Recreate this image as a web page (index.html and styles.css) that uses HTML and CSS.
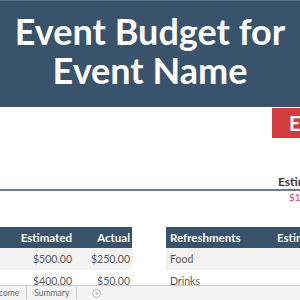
FILE: index.html
```html
<!DOCTYPE html>
<html lang="en">

<head>
    <meta charset="UTF-8">
    <title>Event Budget</title>
    <link rel="stylesheet" href="styles.css">
</head>

<body>

    <div class="sheet">
        <header class="title-bar">
            <h1>
                <span class="title-line">Event Budget for</span>
                <span class="title-line">Event Name</span>
            </h1>
        </header>

        <div class="badge-row">
            <div class="badge">Expenses</div>
        </div>

        <div class="totals">
            <div class="totals-label">Estimated</div>
            <div class="totals-rule"></div>
            <div class="totals-value">$1,</div>
        </div>

        <div class="tables">
            <table class="budget budget-left">
                <thead>
                    <tr>
                        <th class="col-name">Site</th>
                        <th class="col-num">Estimated</th>
                        <th class="col-num">Actual</th>
                    </tr>
                </thead>
                <tbody>
                    <tr class="shaded">
                        <td class="col-name">Room</td>
                        <td class="col-num">$500.00</td>
                        <td class="col-num">$250.00</td>
                    </tr>
                    <tr>
                        <td class="col-name">Site</td>
                        <td class="col-num">$400.00</td>
                        <td class="col-num">$50.00</td>
                    </tr>
                </tbody>
            </table>

            <table class="budget budget-right">
                <thead>
                    <tr>
                        <th class="col-name">Refreshments</th>
                        <th class="col-num">Estimated</th>
                    </tr>
                </thead>
                <tbody>
                    <tr class="shaded">
                        <td class="col-name">Food</td>
                        <td class="col-num"></td>
                    </tr>
                    <tr>
                        <td class="col-name">Drinks</td>
                        <td class="col-num"></td>
                    </tr>
                </tbody>
            </table>
        </div>
    </div>

    <footer class="tab-bar">
        <span class="tab tab-first">Income</span>
        <span class="tab">Summary</span>
        <span class="tab-add">+</span>
    </footer>

</body>

</html>
```

FILE: styles.css
```css
* {
    margin: 0;
    padding: 0;
    box-sizing: border-box;
}

body {
    width: 300px;
    height: 300px;
    overflow: hidden;
    background: white;
    font-family: 'Lato', 'Open Sans', sans-serif;
    display: flex;
    flex-direction: column;
}

.sheet {
    height: 285px;
    overflow: hidden;
}

.title-bar {
    height: 107px;
    background: #38536b;
    border-top: 1px solid #5b7388;
    display: flex;
    justify-content: center;
    padding-top: 11px;
}

.title-bar h1 {
    color: white;
    font-size: 36px;
    font-weight: 700;
    text-align: center;
    white-space: nowrap;
    display: flex;
    flex-direction: column;
}

.title-line {
    height: 39px;
    line-height: 39px;
}

.badge-row {
    padding: 1px 0 0 272px;
    height: 31px;
}

.badge {
    width: 120px;
    height: 30px;
    background: #d23c3c;
    color: white;
    font-size: 20px;
    font-weight: 700;
    line-height: 30px;
    padding-left: 17px;
    white-space: nowrap;
}

.totals {
    padding-top: 38px;
}

.totals-label {
    padding-left: 278px;
    font-size: 12px;
    font-weight: 700;
    color: #3c3c3c;
    line-height: 12px;
    white-space: nowrap;
}

.totals-rule {
    height: 2px;
    margin-top: 1px;
    background: #687d8e;
}

.totals-value {
    padding-left: 289px;
    font-size: 10px;
    color: #d24a4a;
    line-height: 13px;
    white-space: nowrap;
}

.tables {
    display: flex;
    gap: 34px;
    margin-top: 23px;
    white-space: nowrap;
}

.budget {
    border-collapse: collapse;
    table-layout: fixed;
    font-size: 10.5px;
    flex-shrink: 0;
}

.budget th {
    background: #38536b;
    color: white;
    font-weight: 700;
    height: 21px;
    font-size: 11.5px;
}

.budget td {
    height: 22px;
    color: #5a5a5a;
}

.budget .shaded td {
    background: #f2f2f2;
}

.col-num {
    text-align: right;
}

.col-name {
    text-align: left;
}

.budget-left {
    width: 172px;
    margin-left: -40px;
}

.budget-left .col-name {
    width: 56px;
    color: transparent;
}

.budget-left .col-num {
    width: 58px;
    padding-right: 2px;
}

.budget-right {
    width: 180px;
}

.budget-right .col-name {
    width: 111px;
    padding-left: 4px;
}

.budget-right .col-num {
    text-align: left;
    padding-left: 0;
}

.tab-bar {
    height: 15px;
    background: #f4f4f4;
    border-top: 1px solid #cdcdcd;
    display: flex;
    align-items: center;
    font-size: 8.5px;
    color: #666;
}

.tab {
    padding: 0 7px;
    border-right: 1px solid #c8c8c8;
    line-height: 12px;
}

.tab-first {
    margin-left: -15px;
}

.tab-add {
    margin-left: 15px;
    width: 9px;
    height: 9px;
    border: 1px solid #bbb;
    border-radius: 50%;
    color: #aaa;
    font-size: 8px;
    line-height: 7px;
    text-align: center;
}
```
